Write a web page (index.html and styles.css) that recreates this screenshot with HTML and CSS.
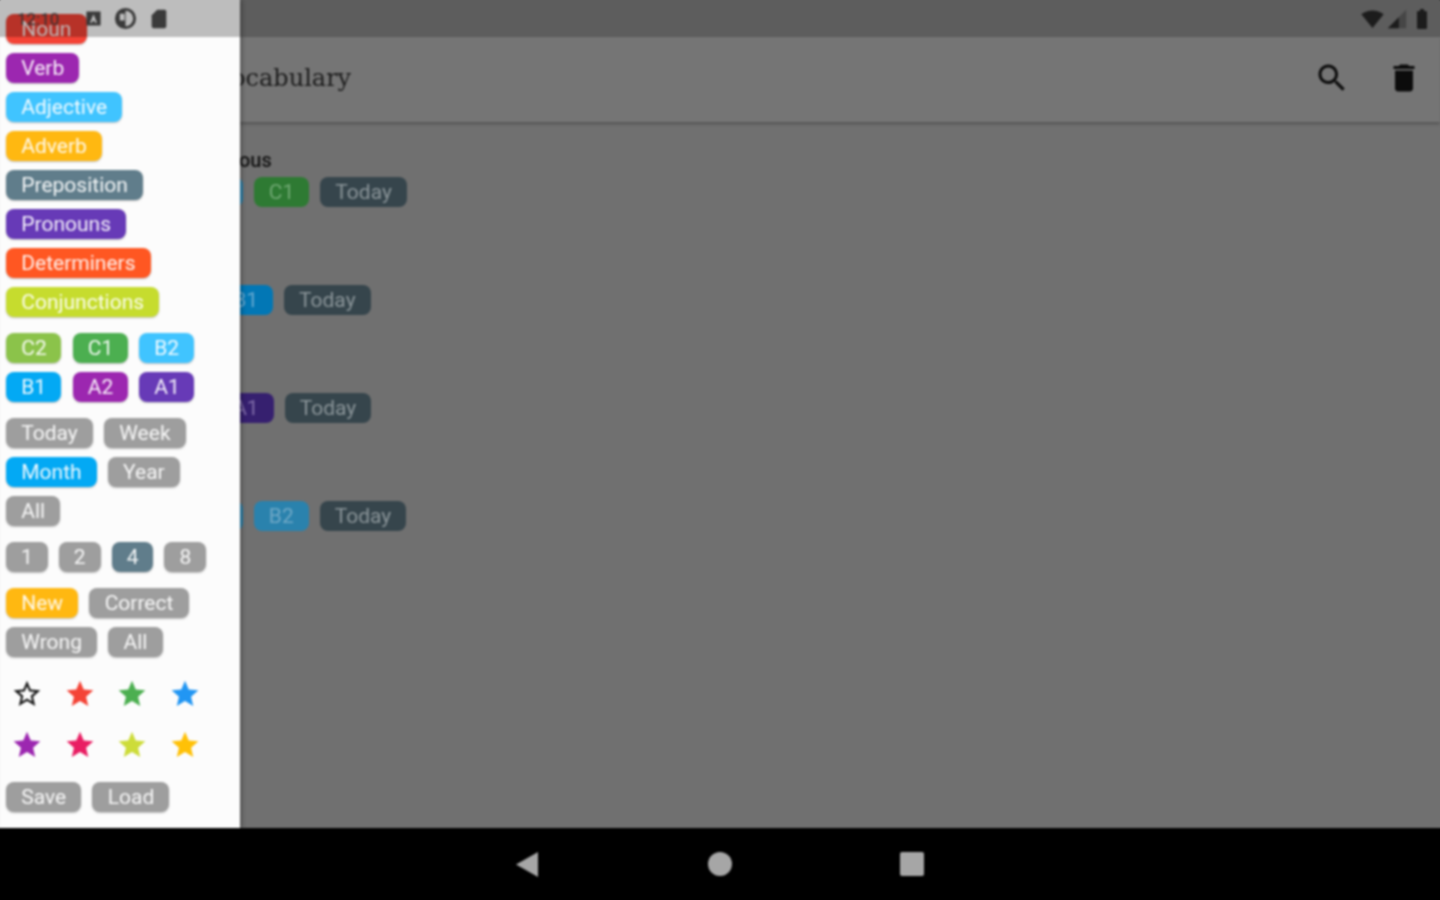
FILE: index.html
```html
<!DOCTYPE html>
<html lang="en">
<head>
  <meta charset="utf-8">
  <meta name="viewport" content="width=device-width, initial-scale=1">
  <title>Vocabulary</title>
  <link rel="stylesheet" href="styles.css">
</head>
<body>
  <div class="device">
    <div class="screen">

      <!-- app behind the drawer, dimmed -->
      <div class="app">
        <div class="status-bar">
          <svg class="status-icon wifi" viewBox="0 0 24 24"><path d="M12.01 21.49L23.64 7c-.45-.34-4.93-4-11.64-4C5.28 3 .81 6.66.36 7l11.64 14.5.01-.01z"/></svg>
          <svg class="status-icon cell" viewBox="0 0 24 24"><path fill-opacity=".35" d="M2 22h20V2z"/><path d="M14 10L2 22h12z"/></svg>
          <svg class="status-icon battery" viewBox="0 0 24 24"><path d="M15.67 4H14V2h-4v2H8.33C7.6 4 7 4.6 7 5.33v15.33C7 21.4 7.6 22 8.33 22h7.33c.74 0 1.34-.6 1.34-1.33V5.33C17 4.6 16.4 4 15.67 4z"/></svg>
        </div>
        <header class="toolbar">
          <h1 class="toolbar-title">Vocabulary</h1>
          <div class="toolbar-actions">
            <svg class="action-icon" viewBox="0 0 24 24"><path d="M15.5 14h-.79l-.28-.27C15.41 12.59 16 11.11 16 9.5 16 5.91 13.09 3 9.5 3S3 5.91 3 9.5 5.91 16 9.5 16c1.61 0 3.09-.59 4.23-1.57l.27.28v.79l5 4.99L20.49 19l-4.99-5zm-6 0C7.01 14 5 11.99 5 9.5S7.01 5 9.5 5 14 7.01 14 9.5 11.99 14 9.5 14z"/></svg>
            <svg class="action-icon" viewBox="0 0 24 24"><path d="M6 19c0 1.1.9 2 2 2h8c1.1 0 2-.9 2-2V7H6v12zM19 4h-3.5l-1-1h-5l-1 1H5v2h14V4z"/></svg>
          </div>
        </header>
        <main class="word-list">
          <div class="word">
            <div class="word-name">Conscientious</div>
            <div class="word-tags">
              <span class="tag dim-sky">Adjective</span>
              <span class="tag dim-green">C1</span>
              <span class="tag dim-slate">Today</span>
            </div>
          </div>
          <!-- the names of the next rows are covered by the drawer -->
          <div class="word">
            <div class="word-name"></div>
            <div class="word-tags">
              <span class="tag dim-red">Noun</span>
              <span class="tag dim-blue">B1</span>
              <span class="tag dim-slate">Today</span>
            </div>
          </div>
          <div class="word">
            <div class="word-name"></div>
            <div class="word-tags">
              <span class="tag dim-red">Noun</span>
              <span class="tag dim-indigo">A1</span>
              <span class="tag dim-slate">Today</span>
            </div>
          </div>
          <div class="word">
            <div class="word-name"></div>
            <div class="word-tags">
              <span class="tag dim-sky">Adjective</span>
              <span class="tag dim-sky">B2</span>
              <span class="tag dim-slate">Today</span>
            </div>
          </div>
        </main>
      </div>

      <!-- filter drawer -->
      <aside class="drawer">
        <div class="drawer-status">
          <span class="clock">12:10</span>
          <svg class="small-icon box-a" viewBox="0 0 24 24"><path fill-rule="evenodd" d="M2 2h20v20H2zM12 6l-5 12h3l1-3h2l1 3h3z"/></svg>
          <svg class="small-icon circle-p" viewBox="0 0 24 24"><path fill-rule="evenodd" d="M12 1a11 11 0 1 0 0 22 11 11 0 0 0 0-22zm0 3a8 8 0 0 1 0 16zM6 7h5v7H6z"/></svg>
          <svg class="small-icon sd" viewBox="0 0 24 24"><path d="M18 2h-8L4 8v12c0 1.1.9 2 2 2h12c1.1 0 2-.9 2-2V4c0-1.1-.9-2-2-2z"/></svg>
        </div>

        <div class="chip-column">
          <span class="chip red">Noun</span>
          <span class="chip purple">Verb</span>
          <span class="chip sky">Adjective</span>
          <span class="chip amber">Adverb</span>
          <span class="chip slate">Preposition</span>
          <span class="chip indigo">Pronouns</span>
          <span class="chip orange">Determiners</span>
          <span class="chip lime">Conjunctions</span>
        </div>

        <div class="chip-row levels">
          <span class="chip leaf">C2</span>
          <span class="chip green">C1</span>
          <span class="chip sky">B2</span>
          <span class="chip blue">B1</span>
          <span class="chip purple">A2</span>
          <span class="chip indigo">A1</span>
        </div>

        <div class="chip-row periods">
          <span class="chip">Today</span>
          <span class="chip">Week</span>
          <span class="chip blue">Month</span>
          <span class="chip">Year</span>
          <span class="chip">All</span>
        </div>

        <div class="chip-row counts">
          <span class="chip">1</span>
          <span class="chip">2</span>
          <span class="chip slate">4</span>
          <span class="chip">8</span>
        </div>

        <div class="chip-row results">
          <span class="chip amber">New</span>
          <span class="chip">Correct</span>
          <span class="chip">Wrong</span>
          <span class="chip">All</span>
        </div>

        <div class="stars">
          <svg class="star" viewBox="0 0 24 24"><path d="M22 9.24l-7.19-.62L12 2 9.19 8.63 2 9.24l5.46 4.73L5.82 21 12 17.27 18.18 21l-1.63-7.03L22 9.24zM12 15.4l-3.76 2.27 1-4.28-3.32-2.88 4.38-.38L12 6.1l1.71 4.04 4.38.38-3.32 2.88 1 4.28L12 15.4z"/></svg>
          <svg class="star star-red" viewBox="0 0 24 24"><path d="M12 17.27L18.18 21l-1.64-7.03L22 9.24l-7.19-.61L12 2 9.19 8.63 2 9.24l5.46 4.73L5.82 21z"/></svg>
          <svg class="star star-green" viewBox="0 0 24 24"><path d="M12 17.27L18.18 21l-1.64-7.03L22 9.24l-7.19-.61L12 2 9.19 8.63 2 9.24l5.46 4.73L5.82 21z"/></svg>
          <svg class="star star-blue" viewBox="0 0 24 24"><path d="M12 17.27L18.18 21l-1.64-7.03L22 9.24l-7.19-.61L12 2 9.19 8.63 2 9.24l5.46 4.73L5.82 21z"/></svg>
          <svg class="star star-purple" viewBox="0 0 24 24"><path d="M12 17.27L18.18 21l-1.64-7.03L22 9.24l-7.19-.61L12 2 9.19 8.63 2 9.24l5.46 4.73L5.82 21z"/></svg>
          <svg class="star star-pink" viewBox="0 0 24 24"><path d="M12 17.27L18.18 21l-1.64-7.03L22 9.24l-7.19-.61L12 2 9.19 8.63 2 9.24l5.46 4.73L5.82 21z"/></svg>
          <svg class="star star-lime" viewBox="0 0 24 24"><path d="M12 17.27L18.18 21l-1.64-7.03L22 9.24l-7.19-.61L12 2 9.19 8.63 2 9.24l5.46 4.73L5.82 21z"/></svg>
          <svg class="star star-amber" viewBox="0 0 24 24"><path d="M12 17.27L18.18 21l-1.64-7.03L22 9.24l-7.19-.61L12 2 9.19 8.63 2 9.24l5.46 4.73L5.82 21z"/></svg>
        </div>

        <div class="chip-row">
          <span class="chip">Save</span>
          <span class="chip">Load</span>
        </div>
      </aside>
    </div>

    <nav class="nav-bar">
      <svg class="nav-icon" viewBox="0 0 24 24"><path d="M22 0v25L0 12.5z"/></svg>
      <svg class="nav-icon" viewBox="0 0 24 24"><circle cx="12" cy="12" r="12"/></svg>
      <svg class="nav-icon" viewBox="0 0 24 24"><rect width="24" height="24" rx="2"/></svg>
    </nav>
  </div>
</body>
</html>
```

FILE: styles.css
```css
body {
  margin: 0;
  font-family: Roboto, "Liberation Sans", sans-serif;
  background-color: black;
  overflow: hidden;
}

/* the reference is an upscaled phone capture, so everything is a little soft */
.device {
  display: flex;
  flex-direction: column;
  height: 900px;
  filter: blur(0.85px);
}

/* the 4px edge shadows stop the blur pulling in black at the window edge */
.screen {
  position: relative;
  flex: 1;
  background-color: #707070;
  box-shadow: 4px 0 0 #707070;
}

.app {
  display: flex;
  flex-direction: column;
  height: 100%;
}

.status-bar {
  display: flex;
  align-items: center;
  justify-content: flex-end;
  height: 37px;
  padding-right: 6px;
  background-color: #5d5d5d;
  box-shadow: 0 -4px 0 #5d5d5d, 4px 0 0 #5d5d5d;
}

.status-icon {
  width: 24px;
  height: 24px;
  fill: #1c1c1c;
}

.wifi {
  width: 23px;
}

.cell {
  width: 22px;
  height: 22px;
  margin-left: 2px;
}

.battery {
  margin-left: 2px;
}

.toolbar {
  display: flex;
  align-items: center;
  justify-content: space-between;
  box-sizing: border-box;
  height: 85px;
  padding: 0 18px 3px 216px;
  background-color: #757575;
  box-shadow: 0 2px 3px rgba(0, 0, 0, 0.25), 4px 0 0 #757575;
}

.toolbar-title {
  margin: 0;
  font-family: "DejaVu Serif", "Liberation Serif", serif;
  font-size: 24px;
  font-weight: 400;
  color: #1d1d1d;
}

.toolbar-actions {
  display: flex;
  gap: 36px;
}

.action-icon {
  width: 36px;
  height: 36px;
  fill: #0c0c0c;
}

.word-list {
  display: flex;
  flex-direction: column;
  gap: 49px;
  padding: 26px 0 0 127px;
}

.word-name {
  height: 24px;
  margin-left: 17px;
  font-size: 20px;
  font-weight: 500;
  line-height: 24px;
  color: #141414;
}

.word-tags {
  display: flex;
  gap: 11px;
  margin-top: 5px;
}

.tag {
  height: 30px;
  padding: 0 15px;
  border-radius: 8px;
  font-size: 21px;
  line-height: 30px;
  color: #8a9498;
}

.dim-sky { background-color: #2a82ad; color: #6fa8c6; }
.dim-green { background-color: #2e7a33; color: #70a873; }
.dim-slate { background-color: #36454c; }
.dim-red { background-color: #a33; }
.dim-blue { background-color: #0277b5; color: #65a8d0; }
.dim-indigo { background-color: #36206f; color: #7f6ba8; }

.drawer {
  position: absolute;
  top: 0;
  left: 0;
  bottom: 0;
  display: flex;
  flex-direction: column;
  gap: 16px;
  box-sizing: border-box;
  width: 240px;
  padding: 14px 0 16px 6px;
  background-color: #fcfcfc;
  box-shadow: 2px 0 4px rgba(0, 0, 0, 0.3), -4px 0 0 #fcfcfc;
}

/* translucent status bar sits on top of the drawer and its first chip */
.drawer-status {
  position: absolute;
  top: 0;
  left: 0;
  right: 0;
  z-index: 1;
  display: flex;
  align-items: center;
  height: 37px;
  background-color: rgba(0, 0, 0, 0.25);
  box-shadow: 0 -4px 0 #bdbdbd, -4px 0 0 #bdbdbd;
}

.clock {
  width: 85px;
  padding-left: 17px;
  box-sizing: border-box;
  font-size: 17px;
  color: #333;
}

.small-icon {
  fill: #3a3a3a;
}

.box-a {
  width: 17px;
  height: 17px;
}

.circle-p {
  width: 23px;
  height: 23px;
  margin-left: 12px;
}

.sd {
  width: 22px;
  height: 22px;
  margin-left: 11px;
}

.chip-column {
  display: flex;
  flex-direction: column;
  align-items: flex-start;
  gap: 9px;
}

.chip-row {
  display: flex;
  flex-wrap: wrap;
  gap: 9px 11px;
}

.levels {
  display: grid;
  grid-template-columns: repeat(3, 55px);
  column-gap: 11.5px;
}

.periods {
  width: 190px;
}

.results {
  width: 190px;
}

.chip {
  height: 30px;
  padding: 0 15.25px;
  border-radius: 8px;
  background-color: #9e9e9e;
  box-shadow: 0 1px 2px rgba(0, 0, 0, 0.25);
  font-size: 21px;
  line-height: 30px;
  color: rgba(255, 255, 255, 0.92);
}

.levels .chip {
  text-align: center;
}

.counts .chip {
  padding: 0 15px;
}

.red { background-color: #f44336; }
.purple { background-color: #9c27b0; }
.sky { background-color: #40c4ff; }
.amber { background-color: #ffb811; }
.slate { background-color: #607d8b; }
.indigo { background-color: #673ab7; }
.orange { background-color: #ff5722; }
.lime { background-color: #c6dc2e; }
.leaf { background-color: #8bc34a; }
.green { background-color: #4caf50; }
.blue { background-color: #03a9f4; }

.stars {
  display: grid;
  grid-template-columns: repeat(4, 32px);
  gap: 19px 20.5px;
  padding: 5px 0 5px 5px;
}

.star {
  width: 32px;
  height: 32px;
  fill: #1a1a1a;
}

.star-red { fill: #f44336; }
.star-green { fill: #4caf50; }
.star-blue { fill: #2196f3; }
.star-purple { fill: #9c27b0; }
.star-pink { fill: #e91e63; }
.star-lime { fill: #cddc39; }
.star-amber { fill: #ffc107; }

.nav-bar {
  display: flex;
  align-items: center;
  justify-content: center;
  gap: 168px;
  height: 72px;
  background-color: black;
}

.nav-icon {
  width: 24px;
  height: 24px;
  overflow: visible;
  fill: #a6a6a6;
}
```
